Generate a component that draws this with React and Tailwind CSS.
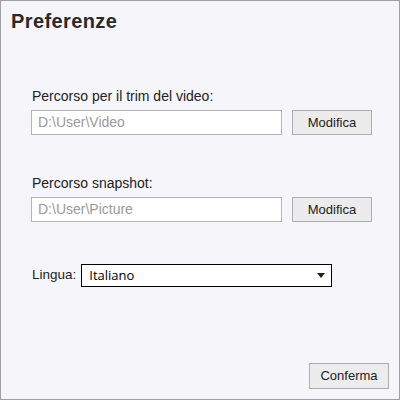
export default function App() {
    return (
        <div
            className="flex h-[400px] w-[400px] flex-col border border-[#a0a0a0] bg-[#f6f6fa] text-[#222]"
            style={{ fontFamily: '"Liberation Sans", Arial, sans-serif' }}
        >
            <h1 className="ml-[10px] mt-[9px] text-[20px] font-bold leading-[22px] tracking-[0.4px] text-[#2a2a2a]">
                Preferenze
            </h1>

            <div className="ml-[30px] mt-[56px] flex flex-col">
                <label className="pl-[1px] text-[14px] leading-[16px]">Percorso per il trim del video:</label>
                <div className="mt-[6px] flex items-center gap-[10px]">
                    <div className="flex h-[25px] w-[251px] items-center border border-[#b4b4b4] bg-white px-[6px] text-[14px] text-[#9a9a9a]">
                        D:\User\Video
                    </div>
                    <button className="h-[25px] w-[80px] border border-[#adadad] bg-[#ececec] text-[13px] text-[#222]">
                        Modifica
                    </button>
                </div>

                <label className="mt-[40px] pl-[1px] text-[14px] leading-[16px]">Percorso snapshot:</label>
                <div className="mt-[6px] flex items-center gap-[10px]">
                    <div className="flex h-[25px] w-[251px] items-center border border-[#b4b4b4] bg-white px-[6px] text-[14px] text-[#9a9a9a]">
                        D:\User\Picture
                    </div>
                    <button className="h-[25px] w-[80px] border border-[#adadad] bg-[#ececec] text-[13px] text-[#222]">
                        Modifica
                    </button>
                </div>

                <div className="mt-[42px] flex items-center">
                    <span className="pl-[1px] text-[13.5px]">Lingua:</span>
                    <div
                        className="ml-[5px] flex h-[23px] w-[251px] items-center justify-between border border-black bg-white pl-[7px] pr-[6px] text-black"
                        style={{ fontFamily: '"Open Sans", "Noto Sans", sans-serif' }}
                    >
                        <span className="text-[13px]">Italiano</span>
                        <svg width="8" height="5" viewBox="0 0 8 5">
                            <path d="M0 0h8L4 5z" fill="#222" />
                        </svg>
                    </div>
                </div>
            </div>

            <div className="mt-auto mb-[10px] mr-[10px] flex justify-end">
                <button className="h-[26px] w-[80px] border border-[#adadad] bg-[#ececec] text-[13px] text-[#222]">
                    Conferma
                </button>
            </div>
        </div>
    );
}
